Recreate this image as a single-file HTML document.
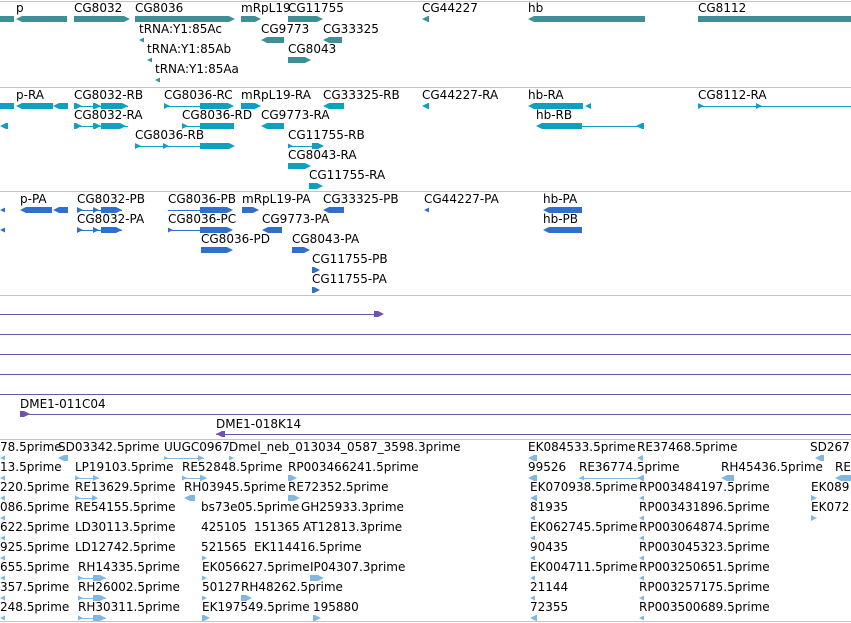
<!DOCTYPE html>
<html><head><meta charset="utf-8"><style>
body{margin:0;width:851px;height:623px;overflow:hidden;background:#fff;position:relative;font-family:"DejaVu Sans","Liberation Sans",sans-serif}
.t{position:absolute;font-size:12px;line-height:14px;white-space:nowrap;color:#000}
.b{position:absolute;height:6px;display:block}
.l{position:absolute;height:1px;display:block}
.h{position:absolute;left:0;width:851px;height:1px;background:#c4c4c4}
.c1{background:#3f9096}.c2{background:#0fa0c0}.c3{background:#3070cc}.c4{background:#7050b0}.c5{background:#82b8e0}
.L{clip-path:polygon(0 50%,6px 0,100% 0,100% 100%,6px 100%)}
.R{clip-path:polygon(0 0,calc(100% - 6px) 0,100% 50%,calc(100% - 6px) 100%,0 100%)}
</style></head><body>
<div class="h" style="top:1px"></div>
<div class="h" style="top:87px"></div>
<div class="h" style="top:191px"></div>
<div class="h" style="top:295px"></div>
<div class="h" style="top:439px"></div>
<div class="h" style="top:621px"></div>

<!-- track 1 -->
<i class="b c1" style="left:0;top:16px;width:14px"></i>
<div class="t" style="left:16px;top:1px">p</div><i class="b c1 L" style="left:16px;top:16px;width:51px"></i>
<div class="t" style="left:74px;top:1px">CG8032</div><i class="b c1 R" style="left:74px;top:16px;width:56px"></i>
<div class="t" style="left:135px;top:1px">CG8036</div><i class="b c1 R" style="left:135px;top:16px;width:100px"></i>
<div class="t" style="left:241px;top:1px">mRpL19</div><i class="b c1 R" style="left:241px;top:16px;width:20px"></i>
<div class="t" style="left:288px;top:1px">CG11755</div><i class="b c1 R" style="left:288px;top:16px;width:35px"></i>
<div class="t" style="left:422px;top:1px">CG44227</div><i class="b c1 L" style="left:422px;top:16px;width:7px"></i>
<div class="t" style="left:528px;top:1px">hb</div><i class="b c1 L" style="left:528px;top:16px;width:117px"></i>
<div class="t" style="left:698px;top:1px">CG8112</div><i class="b c1" style="left:698px;top:16px;width:153px"></i>
<div class="t" style="left:139px;top:22px">tRNA:Y1:85Ac</div><i class="b c1 L" style="left:139px;top:37px;width:5px"></i>
<div class="t" style="left:261px;top:22px">CG9773</div><i class="b c1 L" style="left:261px;top:37px;width:23px"></i>
<div class="t" style="left:323px;top:22px">CG33325</div><i class="b c1 L" style="left:323px;top:37px;width:19px"></i>
<div class="t" style="left:147px;top:42px">tRNA:Y1:85Ab</div><i class="b c1 L" style="left:147px;top:57px;width:5px"></i>
<div class="t" style="left:288px;top:42px">CG8043</div><i class="b c1 R" style="left:288px;top:57px;width:23px"></i>
<div class="t" style="left:155px;top:62px">tRNA:Y1:85Aa</div><i class="b c1 L" style="left:155px;top:77px;width:5px"></i>

<!-- track 2 -->
<i class="b c2" style="left:0;top:103px;width:14px"></i>
<div class="t" style="left:16px;top:88px">p-RA</div><i class="b c2 L" style="left:16px;top:103px;width:37px"></i><i class="b c2 L" style="left:53px;top:103px;width:15px"></i>
<div class="t" style="left:74px;top:88px">CG8032-RB</div><i class="l c2" style="left:74px;top:106px;width:54px"></i><i class="b c2 R" style="left:74px;top:103px;width:8px"></i><i class="b c2 R" style="left:93px;top:103px;width:8px"></i><i class="b c2 R" style="left:101px;top:103px;width:27px"></i>
<div class="t" style="left:164px;top:88px">CG8036-RC</div><i class="l c2" style="left:164px;top:106px;width:36px"></i><i class="b c2 R" style="left:164px;top:103px;width:6px"></i><i class="b c2 R" style="left:200px;top:103px;width:34px"></i>
<div class="t" style="left:241px;top:88px">mRpL19-RA</div><i class="b c2 R" style="left:241px;top:103px;width:20px"></i>
<div class="t" style="left:323px;top:88px">CG33325-RB</div><i class="b c2 L" style="left:323px;top:103px;width:21px"></i>
<div class="t" style="left:422px;top:88px">CG44227-RA</div><i class="b c2 L" style="left:422px;top:103px;width:7px"></i>
<div class="t" style="left:528px;top:88px">hb-RA</div><i class="b c2 L" style="left:528px;top:103px;width:55px"></i><i class="b c2 L" style="left:585px;top:103px;width:6px"></i>
<div class="t" style="left:698px;top:88px">CG8112-RA</div><i class="l c2" style="left:698px;top:106px;width:153px"></i><i class="b c2 R" style="left:698px;top:103px;width:6px"></i><i class="b c2 R" style="left:756px;top:103px;width:6px"></i>
<i class="b c2 L" style="left:0;top:123px;width:8px"></i>
<div class="t" style="left:74px;top:108px">CG8032-RA</div><i class="l c2" style="left:74px;top:126px;width:54px"></i><i class="b c2 R" style="left:74px;top:123px;width:8px"></i><i class="b c2 R" style="left:93px;top:123px;width:8px"></i><i class="b c2 R" style="left:101px;top:123px;width:25px"></i>
<div class="t" style="left:182px;top:108px">CG8036-RD</div><i class="l c2" style="left:182px;top:126px;width:18px"></i><i class="b c2 R" style="left:182px;top:123px;width:6px"></i><i class="b c2" style="left:200px;top:123px;width:34px"></i>
<div class="t" style="left:261px;top:108px">CG9773-RA</div><i class="b c2 L" style="left:261px;top:123px;width:23px"></i>
<div class="t" style="left:536px;top:108px">hb-RB</div><i class="b c2 L" style="left:536px;top:123px;width:46px"></i><i class="l c2" style="left:582px;top:126px;width:60px"></i><i class="b c2 L" style="left:636px;top:123px;width:8px"></i>
<div class="t" style="left:135px;top:128px">CG8036-RB</div><i class="l c2" style="left:135px;top:146px;width:65px"></i><i class="b c2 R" style="left:135px;top:143px;width:6px"></i><i class="b c2 R" style="left:163px;top:143px;width:6px"></i><i class="b c2 R" style="left:200px;top:143px;width:35px"></i>
<div class="t" style="left:288px;top:128px">CG11755-RB</div><i class="l c2" style="left:288px;top:146px;width:24px"></i><i class="b c2 R" style="left:288px;top:143px;width:5px"></i><i class="b c2 R" style="left:312px;top:143px;width:12px"></i>
<div class="t" style="left:288px;top:148px">CG8043-RA</div><i class="b c2 R" style="left:288px;top:163px;width:23px"></i>
<div class="t" style="left:309px;top:168px">CG11755-RA</div><i class="b c2 R" style="left:309px;top:183px;width:14px"></i>

<!-- track 3 -->
<i class="b c3 L" style="left:0;top:207px;width:5px"></i>
<div class="t" style="left:20px;top:192px">p-PA</div><i class="b c3 L" style="left:20px;top:207px;width:32px"></i><i class="b c3 L" style="left:53px;top:207px;width:15px"></i>
<div class="t" style="left:77px;top:192px">CG8032-PB</div><i class="l c3" style="left:77px;top:210px;width:45px"></i><i class="b c3 R" style="left:77px;top:207px;width:6px"></i><i class="b c3 R" style="left:93px;top:207px;width:6px"></i><i class="b c3 R" style="left:101px;top:207px;width:21px"></i>
<div class="t" style="left:168px;top:192px">CG8036-PB</div><i class="l c3" style="left:168px;top:210px;width:32px"></i><i class="b c3 R" style="left:200px;top:207px;width:33px"></i>
<div class="t" style="left:242px;top:192px">mRpL19-PA</div><i class="b c3 R" style="left:242px;top:207px;width:17px"></i>
<div class="t" style="left:323px;top:192px">CG33325-PB</div><i class="b c3 L" style="left:323px;top:207px;width:21px"></i>
<div class="t" style="left:424px;top:192px">CG44227-PA</div><i class="b c3 L" style="left:424px;top:207px;width:5px"></i>
<div class="t" style="left:543px;top:192px">hb-PA</div><i class="b c3 L" style="left:543px;top:207px;width:39px"></i>
<i class="b c3 L" style="left:0;top:227px;width:5px"></i>
<div class="t" style="left:77px;top:212px">CG8032-PA</div><i class="l c3" style="left:77px;top:230px;width:45px"></i><i class="b c3 R" style="left:77px;top:227px;width:6px"></i><i class="b c3 R" style="left:93px;top:227px;width:6px"></i><i class="b c3 R" style="left:101px;top:227px;width:21px"></i>
<div class="t" style="left:168px;top:212px">CG8036-PC</div><i class="l c3" style="left:168px;top:230px;width:32px"></i><i class="b c3 R" style="left:168px;top:227px;width:5px"></i><i class="b c3 R" style="left:200px;top:227px;width:33px"></i>
<div class="t" style="left:262px;top:212px">CG9773-PA</div><i class="b c3 L" style="left:262px;top:227px;width:20px"></i>
<div class="t" style="left:543px;top:212px">hb-PB</div><i class="b c3 L" style="left:543px;top:227px;width:39px"></i>
<div class="t" style="left:201px;top:232px">CG8036-PD</div><i class="b c3 R" style="left:201px;top:247px;width:32px"></i>
<div class="t" style="left:292px;top:232px">CG8043-PA</div><i class="b c3 R" style="left:292px;top:247px;width:18px"></i>
<div class="t" style="left:312px;top:252px">CG11755-PB</div><i class="b c3 R" style="left:312px;top:267px;width:8px"></i>
<div class="t" style="left:312px;top:272px">CG11755-PA</div><i class="b c3 R" style="left:312px;top:287px;width:8px"></i>

<!-- track 4 -->
<i class="l c4" style="left:0;top:314px;width:378px"></i><i class="b c4 R" style="left:374px;top:311px;width:10px"></i>
<i class="l c4" style="left:0;top:334px;width:851px"></i>
<i class="l c4" style="left:0;top:354px;width:851px"></i>
<i class="l c4" style="left:0;top:374px;width:851px"></i>
<i class="l c4" style="left:0;top:394px;width:851px"></i>
<div class="t" style="left:20px;top:397px">DME1-011C04</div><i class="l c4" style="left:20px;top:414px;width:831px"></i><i class="b c4 R" style="left:20px;top:411px;width:10px"></i>
<div class="t" style="left:216px;top:417px">DME1-018K14</div><i class="l c4" style="left:216px;top:434px;width:635px"></i><i class="b c4 L" style="left:216px;top:431px;width:9px"></i>

<!-- track 5 -->
<div class="t" style="left:0;top:440px">78.5prime</div><div class="t" style="left:58px;top:440px">SD03342.5prime</div><div class="t" style="left:164px;top:440px">UUGC0967</div><div class="t" style="left:229px;top:440px">Dmel_neb_013034_0587_3598.3prime</div><div class="t" style="left:528px;top:440px">EK084533.5prime</div><div class="t" style="left:637px;top:440px">RE37468.5prime</div><div class="t" style="left:810px;top:440px">SD267</div>
<i class="b c5 L" style="left:0;top:455px;width:5px"></i><i class="b c5 L" style="left:58px;top:455px;width:10px"></i><i class="l c5" style="left:164px;top:458px;width:40px"></i><i class="b c5 R" style="left:164px;top:455px;width:4px"></i><i class="b c5 R" style="left:198px;top:455px;width:6px"></i><i class="b c5 R" style="left:229px;top:455px;width:5px"></i><i class="b c5 L" style="left:528px;top:455px;width:9px"></i><i class="b c5 L" style="left:637px;top:455px;width:6px"></i><i class="b c5 L" style="left:815px;top:455px;width:9px"></i>

<div class="t" style="left:0;top:460px">13.5prime</div><div class="t" style="left:75px;top:460px">LP19103.5prime</div><div class="t" style="left:182px;top:460px">RE52848.5prime</div><div class="t" style="left:288px;top:460px">RP003466241.5prime</div><div class="t" style="left:528px;top:460px">99526</div><div class="t" style="left:579px;top:460px">RE36774.5prime</div><div class="t" style="left:721px;top:460px">RH45436.5prime</div><div class="t" style="left:835px;top:460px">RE</div>
<i class="b c5 L" style="left:0;top:475px;width:5px"></i><i class="l c5" style="left:75px;top:478px;width:24px"></i><i class="b c5 R" style="left:75px;top:475px;width:5px"></i><i class="b c5 R" style="left:93px;top:475px;width:6px"></i><i class="l c5" style="left:182px;top:478px;width:24px"></i><i class="b c5 R" style="left:182px;top:475px;width:5px"></i><i class="b c5 R" style="left:200px;top:475px;width:7px"></i><i class="b c5 R" style="left:288px;top:475px;width:9px"></i><i class="b c5 L" style="left:528px;top:475px;width:9px"></i><i class="l c5" style="left:579px;top:478px;width:62px"></i><i class="b c5 L" style="left:579px;top:475px;width:5px"></i><i class="b c5 L" style="left:637px;top:475px;width:7px"></i><i class="b c5 L" style="left:721px;top:475px;width:13px"></i><i class="b c5 L" style="left:835px;top:475px;width:16px"></i>

<div class="t" style="left:0;top:480px">220.5prime</div><div class="t" style="left:75px;top:480px">RE13629.5prime</div><div class="t" style="left:184px;top:480px">RH03945.5prime</div><div class="t" style="left:288px;top:480px">RE72352.5prime</div><div class="t" style="left:530px;top:480px">EK070938.5prime</div><div class="t" style="left:639px;top:480px">RP003484197.5prime</div><div class="t" style="left:811px;top:480px">EK089</div>
<i class="b c5 L" style="left:0;top:495px;width:5px"></i><i class="l c5" style="left:75px;top:498px;width:22px"></i><i class="b c5 R" style="left:75px;top:495px;width:5px"></i><i class="b c5 R" style="left:92px;top:495px;width:6px"></i><i class="b c5 L" style="left:184px;top:495px;width:11px"></i><i class="b c5 R" style="left:288px;top:495px;width:12px"></i><i class="b c5 L" style="left:530px;top:495px;width:7px"></i><i class="b c5 L" style="left:639px;top:495px;width:5px"></i><i class="b c5 R" style="left:811px;top:495px;width:6px"></i>

<div class="t" style="left:0;top:500px">086.5prime</div><div class="t" style="left:75px;top:500px">RE54155.5prime</div><div class="t" style="left:201px;top:500px">bs73e05.5prime</div><div class="t" style="left:301px;top:500px">GH25933.3prime</div><div class="t" style="left:530px;top:500px">81935</div><div class="t" style="left:639px;top:500px">RP003431896.5prime</div><div class="t" style="left:811px;top:500px">EK072</div>
<i class="b c5 L" style="left:0;top:515px;width:5px"></i><i class="b c5 L" style="left:530px;top:515px;width:5px"></i><i class="b c5 L" style="left:639px;top:515px;width:5px"></i><i class="b c5 R" style="left:811px;top:515px;width:6px"></i>

<div class="t" style="left:0;top:520px">622.5prime</div><div class="t" style="left:75px;top:520px">LD30113.5prime</div><div class="t" style="left:201px;top:520px">425105</div><div class="t" style="left:254px;top:520px">151365</div><div class="t" style="left:303px;top:520px">AT12813.3prime</div><div class="t" style="left:530px;top:520px">EK062745.5prime</div><div class="t" style="left:639px;top:520px">RP003064874.5prime</div>
<i class="b c5 L" style="left:0;top:535px;width:5px"></i><i class="b c5 L" style="left:530px;top:535px;width:5px"></i><i class="b c5 L" style="left:639px;top:535px;width:5px"></i>

<div class="t" style="left:0;top:540px">925.5prime</div><div class="t" style="left:75px;top:540px">LD12742.5prime</div><div class="t" style="left:201px;top:540px">521565</div><div class="t" style="left:254px;top:540px">EK114416.5prime</div><div class="t" style="left:530px;top:540px">90435</div><div class="t" style="left:639px;top:540px">RP003045323.5prime</div>
<i class="b c5 L" style="left:0;top:555px;width:5px"></i><i class="b c5 R" style="left:202px;top:555px;width:5px"></i><i class="b c5 L" style="left:530px;top:555px;width:5px"></i><i class="b c5 L" style="left:639px;top:555px;width:5px"></i>

<div class="t" style="left:0;top:560px">655.5prime</div><div class="t" style="left:78px;top:560px">RH14335.5prime</div><div class="t" style="left:202px;top:560px">EK056627.5prime</div><div class="t" style="left:310px;top:560px">IP04307.3prime</div><div class="t" style="left:530px;top:560px">EK004711.5prime</div><div class="t" style="left:639px;top:560px">RP003250651.5prime</div>
<i class="b c5 L" style="left:0;top:575px;width:5px"></i><i class="l c5" style="left:78px;top:578px;width:28px"></i><i class="b c5 R" style="left:78px;top:575px;width:5px"></i><i class="b c5 R" style="left:93px;top:575px;width:13px"></i><i class="b c5 R" style="left:202px;top:575px;width:5px"></i><i class="b c5 R" style="left:310px;top:575px;width:14px"></i><i class="b c5 L" style="left:530px;top:575px;width:5px"></i><i class="b c5 L" style="left:639px;top:575px;width:5px"></i>

<div class="t" style="left:0;top:580px">357.5prime</div><div class="t" style="left:78px;top:580px">RH26002.5prime</div><div class="t" style="left:202px;top:580px">50127</div><div class="t" style="left:241px;top:580px">RH48262.5prime</div><div class="t" style="left:530px;top:580px">21144</div><div class="t" style="left:639px;top:580px">RP003257175.5prime</div>
<i class="b c5 L" style="left:0;top:595px;width:5px"></i><i class="l c5" style="left:78px;top:598px;width:28px"></i><i class="b c5 R" style="left:78px;top:595px;width:5px"></i><i class="b c5 R" style="left:93px;top:595px;width:13px"></i><i class="b c5 R" style="left:202px;top:595px;width:5px"></i><i class="b c5 R" style="left:241px;top:595px;width:11px"></i><i class="b c5 L" style="left:530px;top:595px;width:5px"></i><i class="b c5 L" style="left:639px;top:595px;width:5px"></i>

<div class="t" style="left:0;top:600px">248.5prime</div><div class="t" style="left:78px;top:600px">RH30311.5prime</div><div class="t" style="left:202px;top:600px">EK197549.5prime</div><div class="t" style="left:313px;top:600px">195880</div><div class="t" style="left:530px;top:600px">72355</div><div class="t" style="left:639px;top:600px">RP003500689.5prime</div>
<i class="b c5 L" style="left:0;top:615px;width:5px"></i><i class="l c5" style="left:78px;top:618px;width:28px"></i><i class="b c5 R" style="left:78px;top:615px;width:5px"></i><i class="b c5 R" style="left:93px;top:615px;width:13px"></i><i class="b c5 R" style="left:202px;top:615px;width:8px"></i><i class="b c5 R" style="left:313px;top:615px;width:8px"></i><i class="b c5 L" style="left:530px;top:615px;width:7px"></i><i class="b c5 L" style="left:639px;top:615px;width:5px"></i>
</body></html>
